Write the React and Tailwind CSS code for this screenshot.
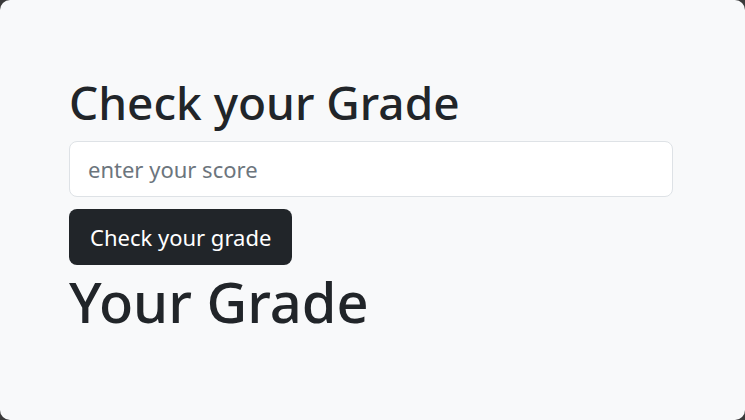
export default function App() {
  return (
    <div className="h-[420px] w-[745px] bg-[#3a3a3a]">
      <div
        className="h-full w-full rounded-[10px] bg-[#f8f9fa] px-[69px] pt-[75px] text-[#212529]"
        style={{ fontFamily: '"Noto Sans", "Open Sans", sans-serif' }}
      >
        <h1 className="mb-[11px] text-[46px] font-medium leading-[1.2]">Check your Grade</h1>
        <input
          type="text"
          placeholder="enter your score"
          className="block h-[56px] w-[604px] rounded-[8px] border border-[#dee2e6] bg-white px-[18px] text-[22px] text-[#212529] placeholder:text-[#6c757d] outline-none"
        />
        <button className="mt-[12px] h-[56px] rounded-[8px] bg-[#212529] px-[21px] text-[22px] text-white">
          Check your grade
        </button>
        <h1 className="mt-[3px] text-[56px] font-medium leading-[1.2]">Your Grade</h1>
      </div>
    </div>
  );
}
